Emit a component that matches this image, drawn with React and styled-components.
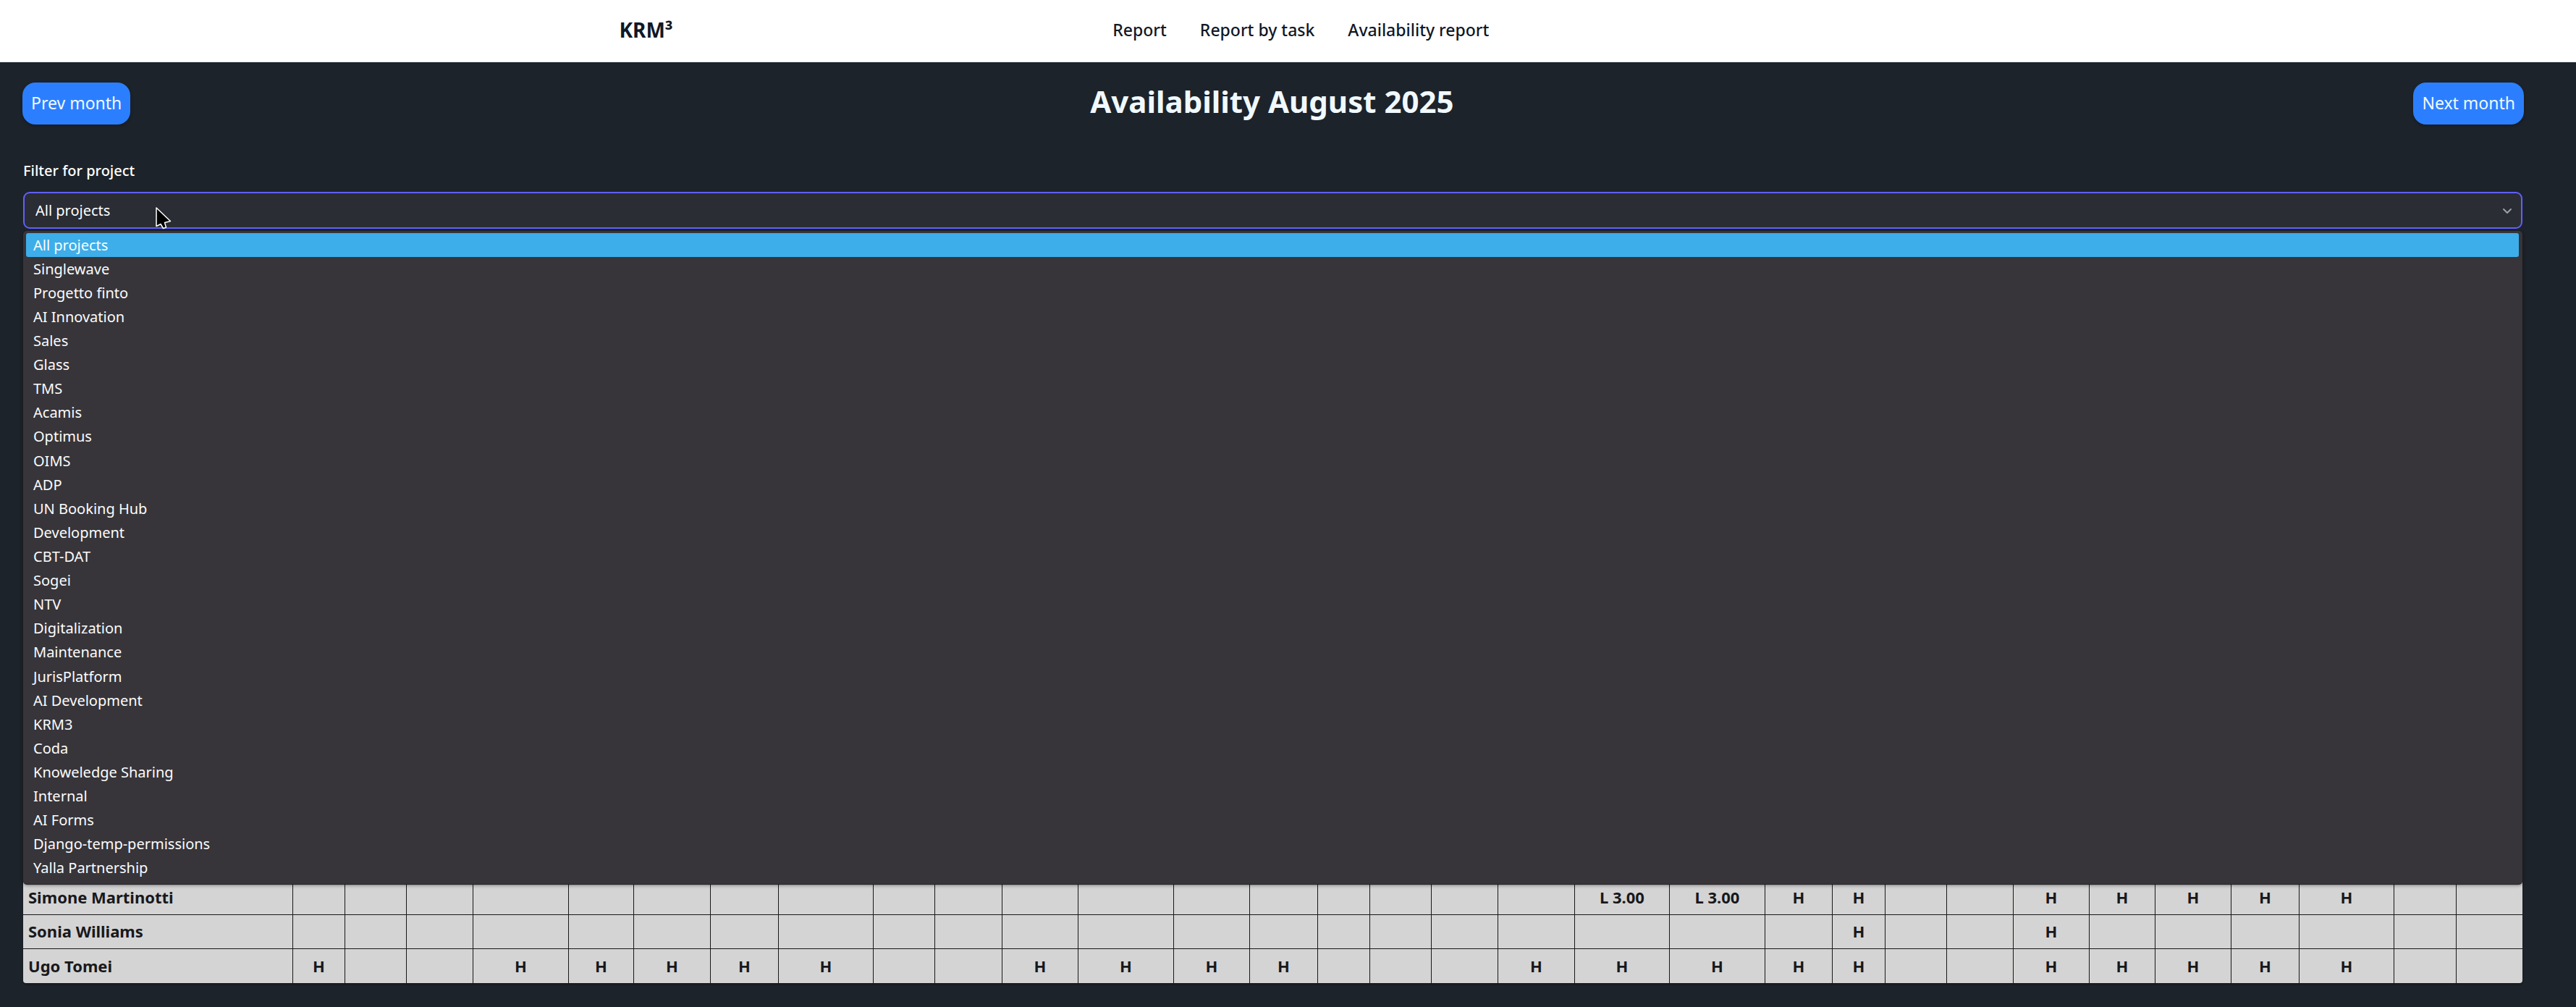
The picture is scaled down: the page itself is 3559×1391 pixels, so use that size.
import React, { useState } from "react";
import styled, { createGlobalStyle } from "styled-components";

const GlobalStyle = createGlobalStyle`
  *, *::before, *::after { box-sizing: border-box; }
  body {
    margin: 0;
    background: #1d232a;
    font-family: "Noto Sans", "Open Sans", sans-serif;
  }
`;

const Page = styled.div`
  min-height: 100vh;
  background: #1d232a;
`;

const Header = styled.header`
  background: #ffffff;
  border-bottom: 1px solid #e2e8f0;
`;

const HeaderInner = styled.div`
  display: flex;
  align-items: center;
  max-width: 1920px;
  margin: 0 auto;
  padding: 21px 36px 24px;
`;

const Brand = styled.a`
  flex: 0 0 37%;
  color: #101828;
  font-size: 28px;
  font-weight: 700;
  line-height: 40px;
  text-decoration: none;
`;

const Nav = styled.nav`
  display: flex;
  gap: 46px;
  margin-left: -2px;
`;

const NavLink = styled.a`
  color: #101828;
  font-size: 23px;
  font-weight: 500;
  line-height: 36px;
  text-decoration: none;
`;

const Main = styled.main`
  padding: 28px 72px 32px 31px;
`;

const MonthBar = styled.div`
  display: flex;
  justify-content: space-between;
  align-items: flex-start;
  margin-bottom: 48px;
`;

const MonthButton = styled.button`
  height: 58px;
  padding: 0 12px 2px;
  border: 0;
  border-radius: 18px;
  background: #2b7fff;
  box-shadow: 0 2px 4px rgba(0, 0, 0, 0.25);
  color: #f0f9ff;
  font-family: inherit;
  font-size: 23px;
  line-height: 36px;
  cursor: pointer;
`;

const Title = styled.h1`
  margin: 0;
  color: #f0f9ff;
  font-size: 42px;
  font-weight: 700;
  line-height: 52px;
`;

const Content = styled.section`
  padding: 0 2px 0 1px;
`;

const FilterLabel = styled.label`
  display: block;
  margin-bottom: 13px;
  color: #ffffff;
  font-size: 20px;
  font-weight: 500;
  line-height: 32px;
`;

const SelectWrap = styled.div`
  position: relative;
`;

const Select = styled.select`
  display: block;
  width: 100%;
  height: 51px;
  padding: 0 48px 0 15px;
  appearance: none;
  border: 2px solid #615fff;
  border-radius: 9px;
  outline: none;
  background: #2a2d34;
  color: #ffffff;
  font-family: inherit;
  font-size: 20px;
`;

const Chevron = styled.svg`
  position: absolute;
  top: 18px;
  right: 12px;
  width: 18px;
  height: 18px;
  pointer-events: none;
`;

const Pointer = styled.svg`
  position: absolute;
  top: 20px;
  left: 182px;
  width: 24px;
  height: 34px;
  z-index: 2;
  pointer-events: none;
`;

const OptionList = styled.ul`
  position: relative;
  z-index: 1;
  display: grid;
  grid-auto-rows: 1fr;
  min-height: 902px;
  margin: 3px 0 0;
  padding: 3px 5px 5px 4px;
  border-radius: 5px;
  background: #37353a;
  box-shadow: 0 1px 1px #18181b, 0 2px 5px rgba(0, 0, 0, 0.4);
  list-style: none;
`;

const OptionItem = styled.li`
  display: flex;
  align-items: center;
  padding: 0 10px;
  border-radius: 3px;
  background: ${(p) => (p.$active ? "#3daee9" : "transparent")};
  color: #fcfcfc;
  font-size: 20px;
  line-height: 32px;
  cursor: default;
`;

const TableFrame = styled.div`
  margin-top: -4px;
  overflow: hidden;
  border-radius: 0 0 4px 4px;
  box-shadow: 0 2px 2px #18181b;
`;

const Table = styled.table`
  width: 100%;
  table-layout: fixed;
  border-collapse: separate;
  border-spacing: 0;
  background: #d4d4d4;
  color: #18181b;
  font-size: 22px;
  font-weight: 700;
`;

const cellLines = `
  height: 47px;
  border-right: 1px solid #18181b;
  border-bottom: 1px solid #18181b;
  line-height: 36px;
  &:last-child { border-right: 0; }
  tr:last-child > & { border-bottom: 0; }
`;

const NameCell = styled.th`
  ${cellLines}
  padding: 0 7px 2px;
  text-align: left;
`;

const DayCell = styled.td`
  ${cellLines}
  padding: 0 0 2px;
  text-align: center;
`;

const projects = [
  "All projects", "Singlewave", "Progetto finto", "AI Innovation", "Sales", "Glass", "TMS",
  "Acamis", "Optimus", "OIMS", "ADP", "UN Booking Hub", "Development", "CBT-DAT", "Sogei",
  "NTV", "Digitalization", "Maintenance", "JurisPlatform", "AI Development", "KRM3", "Coda",
  "Knoweledge Sharing", "Internal", "AI Forms", "Django-temp-permissions", "Yalla Partnership",
];

const nameWeight = 373;
const dayWeights = [
  72, 85, 92, 132, 90, 106, 94, 131, 85, 93, 105, 132, 105, 94, 72, 85,
  92, 106, 131, 132, 93, 73, 85, 92, 105, 91, 105, 94, 131, 86, 91,
];
const totalWeight = dayWeights.reduce((sum, w) => sum + w, nameWeight);
const share = (weight) => ({ width: `${(weight / totalWeight) * 100}%` });

const every = (days, value) => Object.fromEntries(days.map((d) => [d, value]));

const people = [
  {
    name: "Simone Martinotti",
    days: { ...every([19, 20], "L 3.00"), ...every([21, 22, 25, 26, 27, 28, 29], "H") },
  },
  { name: "Sonia Williams", days: every([22, 25], "H") },
  {
    name: "Ugo Tomei",
    days: every([1, 4, 5, 6, 7, 8, 11, 12, 13, 14, 18, 19, 20, 21, 22, 25, 26, 27, 28, 29], "H"),
  },
];

export default function App() {
  const [project, setProject] = useState(projects[0]);

  return (
    <Page>
      <GlobalStyle />
      <Header>
        <HeaderInner>
          <Brand href="#home">KRM³</Brand>
          <Nav>
            <NavLink href="#report">Report</NavLink>
            <NavLink href="#task-report">Report by task</NavLink>
            <NavLink href="#availability">Availability report</NavLink>
          </Nav>
        </HeaderInner>
      </Header>
      <Main>
        <MonthBar>
          <MonthButton type="button">Prev month</MonthButton>
          <Title>Availability August 2025</Title>
          <MonthButton type="button">Next month</MonthButton>
        </MonthBar>
        <Content>
          <FilterLabel htmlFor="project">Filter for project</FilterLabel>
          <SelectWrap>
            <Select id="project" value={project} onChange={(e) => setProject(e.target.value)}>
              {projects.map((p) => (
                <option key={p}>{p}</option>
              ))}
            </Select>
            <Chevron viewBox="0 0 18 18" fill="none" aria-hidden="true">
              <path d="M4 6l5 5 5-5" stroke="#9f9fa9" strokeWidth="2" strokeLinecap="round" strokeLinejoin="round" />
            </Chevron>
            <Pointer viewBox="0 0 24 34" aria-hidden="true">
              <path
                d="M2 2V27.5L8 24.5L11.5 30.5L15.5 29L13.5 22.5L21.5 20.5Z"
                fill="#000000"
                stroke="#ffffff"
                strokeWidth="1.5"
                strokeLinejoin="round"
              />
            </Pointer>
          </SelectWrap>
          <OptionList role="listbox" aria-label="Filter for project">
            {projects.map((p) => (
              <OptionItem
                key={p}
                role="option"
                aria-selected={p === project}
                $active={p === project}
                onClick={() => setProject(p)}
              >
                {p}
              </OptionItem>
            ))}
          </OptionList>
          <TableFrame>
            <Table>
              <colgroup>
                <col style={share(nameWeight)} />
                {dayWeights.map((w, i) => (
                  <col key={i} style={share(w)} />
                ))}
              </colgroup>
              <tbody>
                {people.map((person) => (
                  <tr key={person.name}>
                    <NameCell scope="row">{person.name}</NameCell>
                    {dayWeights.map((_, i) => (
                      <DayCell key={i}>{person.days[i + 1]}</DayCell>
                    ))}
                  </tr>
                ))}
              </tbody>
            </Table>
          </TableFrame>
        </Content>
      </Main>
    </Page>
  );
}
